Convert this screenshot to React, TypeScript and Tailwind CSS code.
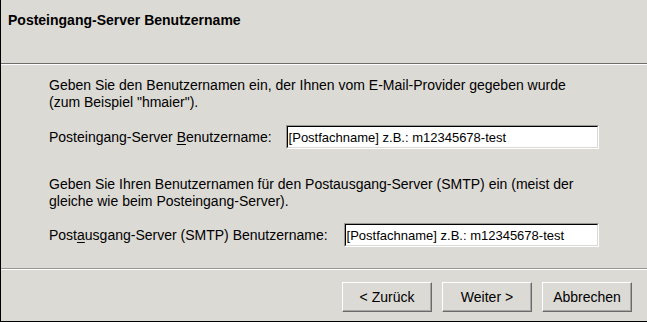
// Assistent-Seite: Posteingang-Server Benutzername (GTK-artiger Dialog)

function Entry({ value, width }: { value: string; width: number }) {
  return (
    <div
      className="flex-none h-6 border border-t-[#9a9893] border-l-[#9a9893] border-b-white border-r-white"
      style={{ width }}
    >
      <div className="h-full bg-white border border-t-black border-l-black border-b-[#dcdad5] border-r-[#dcdad5] flex items-center pl-px text-[13px] text-black whitespace-nowrap overflow-hidden">
        {value}
      </div>
    </div>
  )
}

function Btn({ label }: { label: string }) {
  return (
    <button className="w-[90px] h-[30px] bg-[#dcdad5] border border-t-white border-l-white border-b-[#6a6a6a] border-r-[#6a6a6a] shadow-[inset_-1px_-1px_0_#a8a6a1] text-[14px] text-black flex items-center justify-center">
      {label}
    </button>
  )
}

export default function App() {
  return (
    <div className="w-[647px] h-[322px] flex flex-col bg-[#dcdad5] border-l border-b border-black font-['Liberation_Sans',Arial,sans-serif] text-[14px] text-black leading-[17px]">
      <div className="h-[63px] flex-none px-[7px] pt-[12px] font-bold">Posteingang-Server Benutzername</div>
      <div className="flex-none h-px bg-[#6e6d6a]" />
      <div className="flex-none h-px bg-white" />

      <div className="flex-1 flex flex-col pl-[48px] pt-[12px]">
        <p>
          Geben Sie den Benutzernamen ein, der Ihnen vom E-Mail-Provider gegeben wurde
          <br />
          (zum Beispiel "hmaier").
        </p>
        <div className="flex items-center gap-[14px] mt-[14px]">
          <span className="whitespace-nowrap">
            Posteingang-Server <span className="underline underline-offset-2">B</span>enutzername:
          </span>
          <Entry value="[Postfachname] z.B.: m12345678-test" width={313} />
        </div>

        <p className="mt-[27px]">
          Geben Sie Ihren Benutzernamen für den Postausgang-Server (SMTP) ein (meist der
          <br />
          gleiche wie beim Posteingang-Server).
        </p>
        <div className="flex items-center gap-4 mt-[13px]">
          <span className="whitespace-nowrap">
            Post<span className="underline underline-offset-2">a</span>usgang-Server (SMTP) Benutzername:
          </span>
          <Entry value="[Postfachname] z.B.: m12345678-test" width={255} />
        </div>
      </div>

      <div className="flex-none h-px bg-[#9a9893]" />
      <div className="flex-none h-px bg-white" />
      <div className="flex-none h-[51px] flex items-start justify-end gap-[10px] pt-[12px] pr-[15px]">
        <Btn label="< Zurück" />
        <Btn label="Weiter >" />
        <Btn label="Abbrechen" />
      </div>
    </div>
  )
}
